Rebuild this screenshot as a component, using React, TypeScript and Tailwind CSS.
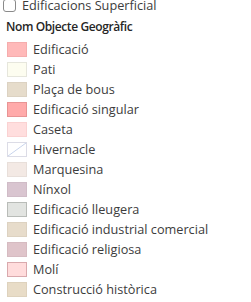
import React from "react";

type Item = { label: string; fill: string; border: string; hatch?: boolean };

const items: Item[] = [
  { label: "Edificació", fill: "#ffb9b9", border: "#f5adad" },
  { label: "Pati", fill: "#fdfdf0", border: "#e6e6dc" },
  { label: "Plaça de bous", fill: "#e6dccb", border: "#dcd2c2" },
  { label: "Edificació singular", fill: "#ffaaaa", border: "#e89494" },
  { label: "Caseta", fill: "#ffdede", border: "#fad2d2" },
  { label: "Hivernacle", fill: "#ffffff", border: "#dcdce6", hatch: true },
  { label: "Marquesina", fill: "#f3e9e4", border: "#e8dfda" },
  { label: "Nínxol", fill: "#d9c5d0", border: "#d0bcc7" },
  { label: "Edificació lleugera", fill: "#e2e4e1", border: "#b9bcb8" },
  { label: "Edificació industrial comercial", fill: "#e7dccb", border: "#ddd2c1" },
  { label: "Edificació religiosa", fill: "#dfc4ca", border: "#d6bbc1" },
  { label: "Molí", fill: "#ffdcdc", border: "#d9a9ad" },
  { label: "Construcció històrica", fill: "#e8dcc7", border: "#ded2bd" },
];

export default function App() {
  return (
    <div className="w-[251px] h-[302px] overflow-hidden bg-white text-[12.7px] text-[#3c3c3c] font-['Open_Sans',sans-serif]">
      <div className="-mt-[5px] h-[20px] flex items-center pl-[3px]">
        <div className="w-[13px] h-[13px] rounded-[3px] border border-[#8a8a8a] bg-white" />
        <span className="ml-[6px] leading-[15px]">Edificacions Superficial</span>
      </div>
      <div className="h-[24px] flex items-center pl-[6px] text-[12px] font-semibold tracking-[-0.4px] text-[#262626]">
        Nom Objecte Geogràfic
      </div>
      <div className="flex flex-col">
        {items.map((it) => (
          <div key={it.label} className="h-[20px] flex items-start pl-[7px] pt-[3px]">
            <div
              className="relative w-[20px] h-[15px] border shrink-0"
              style={{ backgroundColor: it.fill, borderColor: it.border }}
            >
              {it.hatch && (
                <svg className="absolute inset-0" width="18" height="13" viewBox="0 0 18 13">
                  <line x1="0" y1="13" x2="18" y2="0" stroke="#c8d4ec" strokeWidth="1" />
                </svg>
              )}
            </div>
            <span className="ml-[6px] leading-[15px] whitespace-nowrap">{it.label}</span>
          </div>
        ))}
      </div>
    </div>
  );
}
